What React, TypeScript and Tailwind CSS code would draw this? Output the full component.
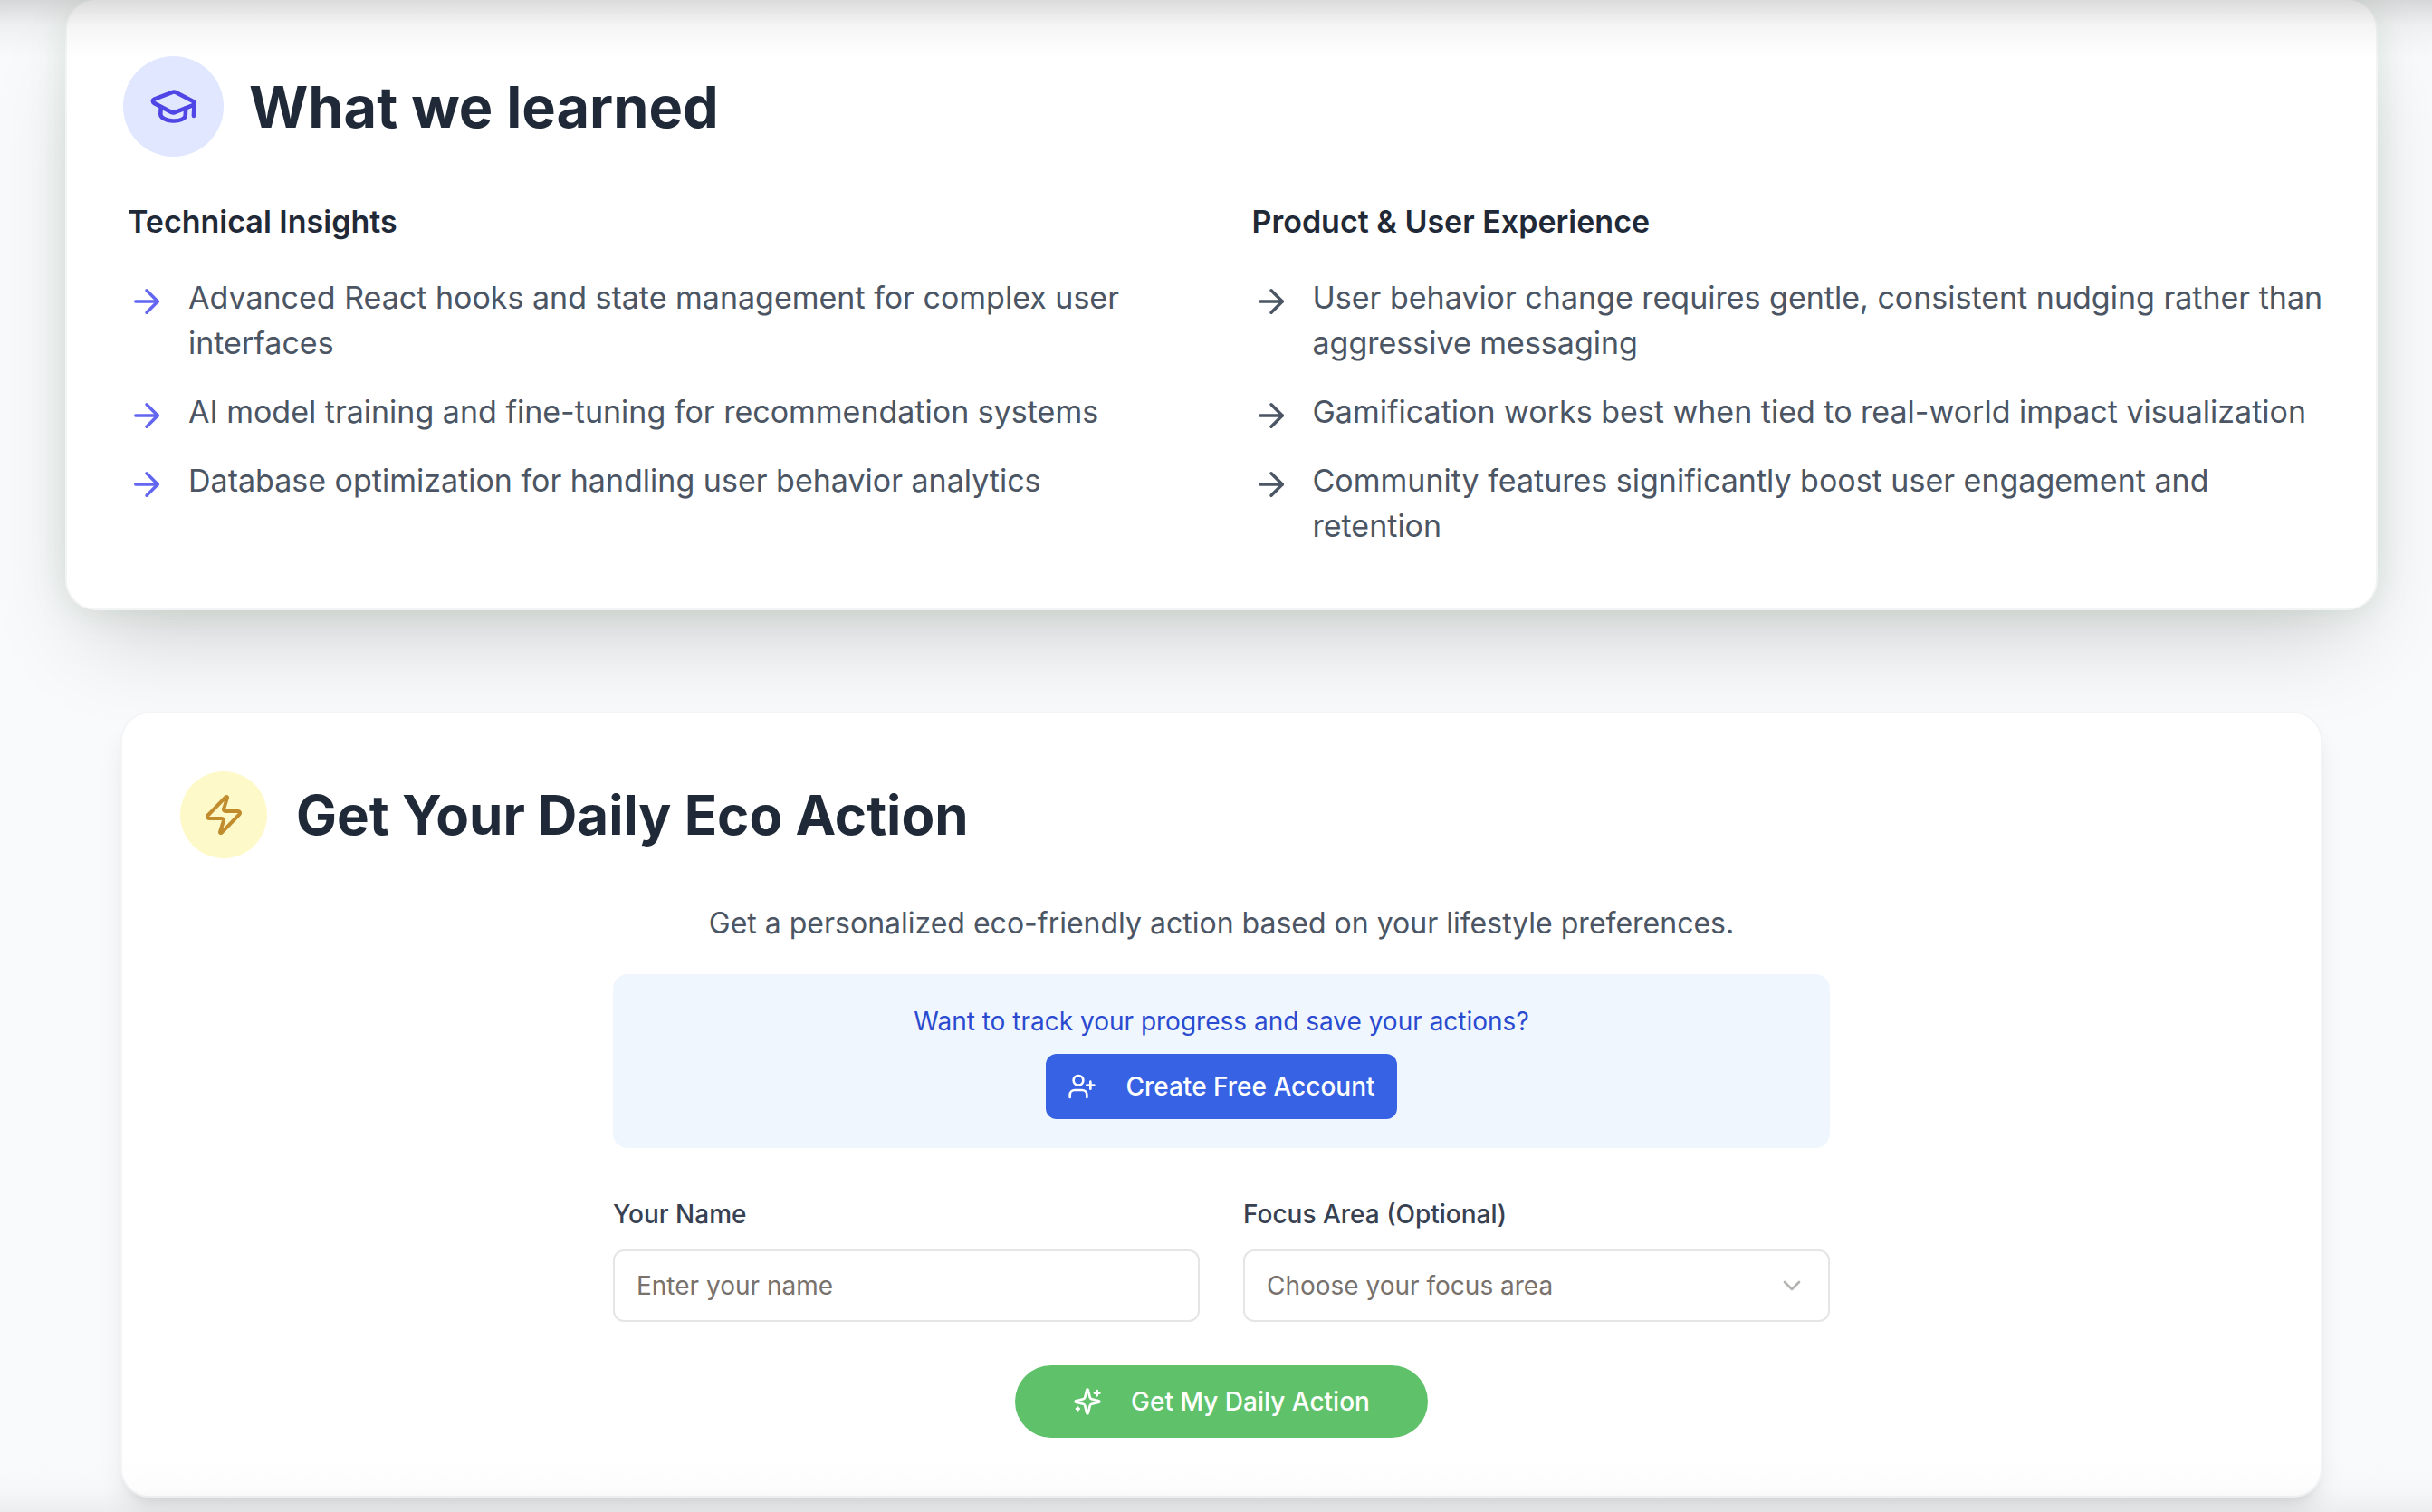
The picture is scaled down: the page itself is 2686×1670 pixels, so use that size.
import { useState } from "react";
import { ArrowRight, ChevronDown, GraduationCap, UserPlus, Zap } from "lucide-react";

const technicalInsights = [
    "Advanced React hooks and state management for complex user interfaces",
    "AI model training and fine-tuning for recommendation systems",
    "Database optimization for handling user behavior analytics",
];

const productInsights = [
    "User behavior change requires gentle, consistent nudging rather than aggressive messaging",
    "Gamification works best when tied to real-world impact visualization",
    "Community features significantly boost user engagement and retention",
];

const focusAreas = ["Energy", "Food", "Transport", "Waste", "Water"];

const SparklesIcon = ({ className }: { className?: string }) => (
    <svg
        viewBox="0 0 24 24"
        fill="none"
        stroke="currentColor"
        strokeWidth="2"
        strokeLinecap="round"
        strokeLinejoin="round"
        aria-hidden="true"
        className={className}
    >
        <path d="M9.937 15.5A2 2 0 0 0 8.5 14.063l-6.135-1.582a.5.5 0 0 1 0-.962L8.5 9.936A2 2 0 0 0 9.937 8.5l1.582-6.135a.5.5 0 0 1 .963 0L14.063 8.5A2 2 0 0 0 15.5 9.937l6.135 1.581a.5.5 0 0 1 0 .964L15.5 14.063a2 2 0 0 0-1.437 1.437l-1.582 6.135a.5.5 0 0 1-.963 0z" />
        <path d="M20 3v4" />
        <path d="M22 5h-4" />
        <path d="M4 17v2" />
        <path d="M5 18H3" />
    </svg>
);

const InsightList = ({ title, items, arrow }: { title: string; items: string[]; arrow: string }) => (
    <div>
        <h3 className="mb-[34px] font-semibold text-[#1f2937]">{title}</h3>
        <ul className="space-y-[26px]">
            {items.map((item) => (
                <li key={item} className="flex items-start gap-[25px]">
                    <ArrowRight className={`mt-2 size-[42px] shrink-0 ${arrow}`} />
                    <span>{item}</span>
                </li>
            ))}
        </ul>
    </div>
);

const App = () => {
    const [name, setName] = useState("");
    const [focus, setFocus] = useState("");

    return (
        <div className="relative min-h-screen overflow-hidden bg-[#f9fafc] pb-4 font-[Inter,sans-serif] text-[#4b5563]">
            <section className="-mt-[2px] mr-[60px] ml-[72px] rounded-[34px] border-2 border-gray-100 bg-white pt-[67px] pr-[52px] pb-[66px] pl-[67px] shadow-[0_52px_105px_-25px_rgba(0,0,0,0.17),0_0_42px_rgba(64,150,64,0.14)]">
                <div className="mb-[52px] flex items-center gap-[29px]">
                    <div className="-m-[5px] flex size-[111px] shrink-0 items-center justify-center rounded-full bg-[#e0e7ff]">
                        <GraduationCap className="size-[55px] rotate-3 text-[#4f46e5]" />
                    </div>
                    <h2 className="ml-1 text-[63px] leading-[76px] font-bold text-[#1f2937]">What we learned</h2>
                </div>
                <div className="grid grid-cols-2 gap-[52px] text-[34px] leading-[50px]">
                    <InsightList title="Technical Insights" items={technicalInsights} arrow="text-[#6366f1]" />
                    <InsightList title="Product & User Experience" items={productInsights} arrow="text-[#4b5563]" />
                </div>
            </section>

            <section className="mt-28 mr-[121px] ml-[133px] rounded-[32px] border-2 border-gray-100 bg-white p-16 shadow-[0_20px_30px_-6px_rgba(0,0,0,0.1),0_8px_12px_-8px_rgba(0,0,0,0.1)]">
                <div className="mb-12 flex items-center gap-8">
                    <div className="flex size-24 shrink-0 items-center justify-center rounded-full bg-[#fdf9c9]">
                        <Zap className="size-12 text-[#c08c2e]" />
                    </div>
                    <h2 className="text-[60px] leading-[72px] font-bold text-[#1f2937]">Get Your Daily Eco Action</h2>
                </div>
                <div className="mx-auto max-w-[1344px] text-[28px]">
                    <p className="mb-8 text-center text-[32px] leading-[48px]">
                        Get a personalized eco-friendly action based on your lifestyle preferences.
                    </p>
                    <div className="mb-12 flex flex-col items-center gap-4 rounded-2xl bg-[#f0f6fe] p-8">
                        <p className="leading-[40px] text-[#2a4bd0]">Want to track your progress and save your actions?</p>
                        <button
                            type="button"
                            className="flex h-[72px] items-center gap-8 rounded-xl bg-[#3662e3] px-6 font-medium text-white"
                        >
                            <UserPlus className="size-8" />
                            Create Free Account
                        </button>
                    </div>
                    <form onSubmit={(event) => event.preventDefault()}>
                        <div className="mb-12 grid grid-cols-2 gap-12">
                            <div>
                                <label htmlFor="name" className="mb-[14px] block leading-[50px] font-medium text-[#374151]">
                                    Your Name
                                </label>
                                <input
                                    id="name"
                                    value={name}
                                    onChange={(event) => setName(event.target.value)}
                                    placeholder="Enter your name"
                                    className="h-20 w-full rounded-xl border-2 border-neutral-200 px-6 placeholder:text-[#78716c]"
                                />
                            </div>
                            <div>
                                <label htmlFor="focus" className="mb-[14px] block leading-[50px] font-medium text-[#374151]">
                                    Focus Area (Optional)
                                </label>
                                <div className="relative">
                                    <select
                                        id="focus"
                                        value={focus}
                                        onChange={(event) => setFocus(event.target.value)}
                                        className="h-20 w-full appearance-none rounded-xl border-2 border-neutral-200 px-6 text-[#78716c]"
                                    >
                                        <option value="">Choose your focus area</option>
                                        {focusAreas.map((area) => (
                                            <option key={area} value={area}>
                                                {area}
                                            </option>
                                        ))}
                                    </select>
                                    <ChevronDown className="pointer-events-none absolute top-6 right-[26px] size-8 text-[#b5b3b0]" />
                                </div>
                            </div>
                        </div>
                        <button
                            type="submit"
                            className="mx-auto flex h-20 items-center gap-8 rounded-full bg-[#5fc26a] px-16 font-medium text-white"
                        >
                            <SparklesIcon className="size-8" />
                            Get My Daily Action
                        </button>
                    </form>
                </div>
            </section>

            <div className="pointer-events-none absolute inset-x-0 top-0 h-16 bg-gradient-to-b from-black/14 via-black/4 via-45% to-transparent" />
            <div className="pointer-events-none absolute inset-x-0 bottom-0 h-16 bg-gradient-to-t from-black/5 via-black/1 via-40% to-transparent" />
        </div>
    );
};
export default App;
